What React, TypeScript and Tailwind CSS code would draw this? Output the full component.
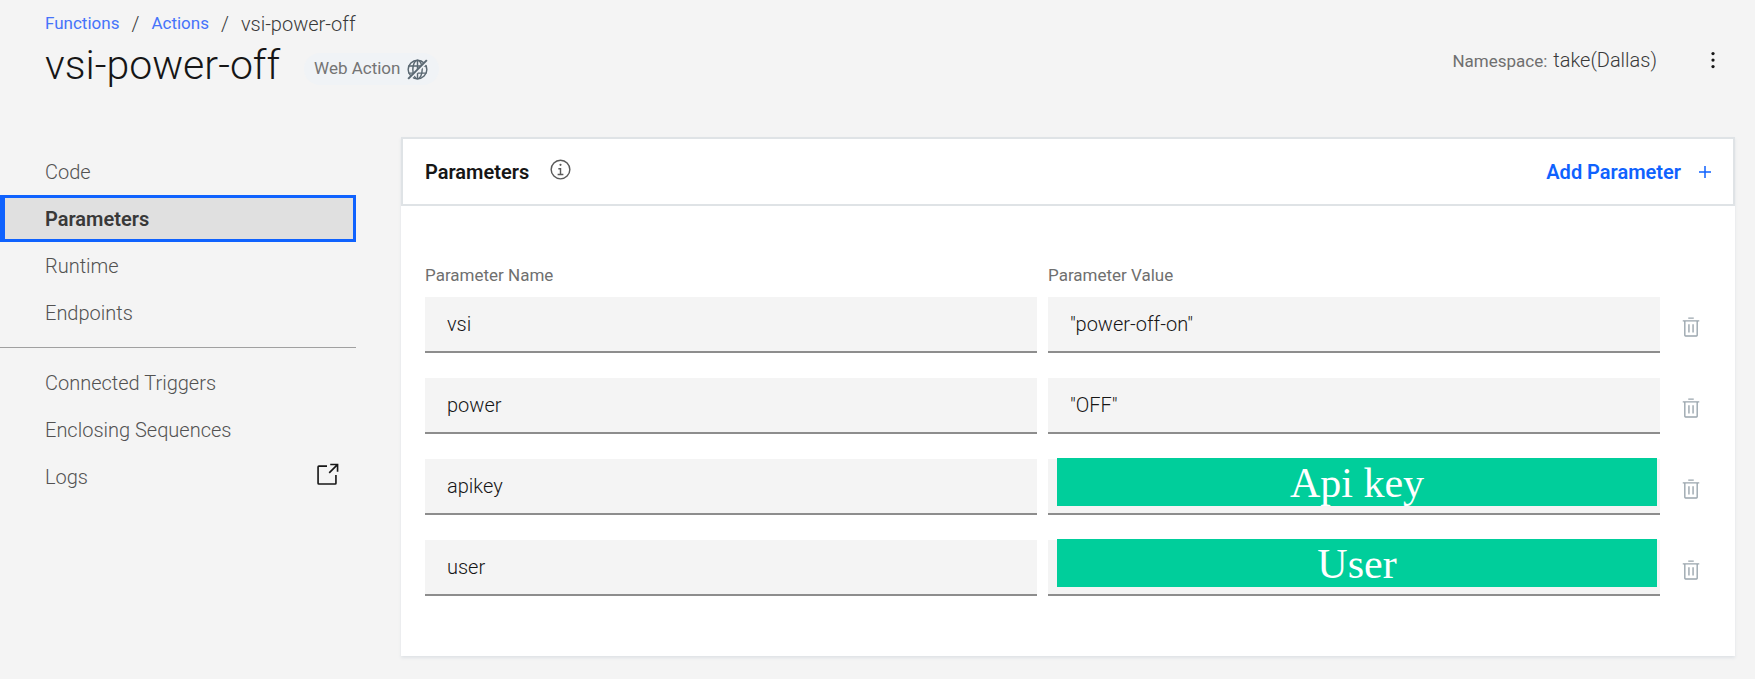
import type { ReactNode } from "react";

type Parameter = { id: string; name: string; value: string; mask?: string };

const parameters: Parameter[] = [
  { id: "vsi", name: "vsi", value: '"power-off-on"' },
  { id: "power", name: "power", value: '"OFF"' },
  { id: "apikey", name: "apikey", value: "", mask: "Api key" },
  { id: "user", name: "user", value: "", mask: "User" },
];

function Icon({ className, children }: { className: string; children: ReactNode }) {
  return (
    <svg viewBox="0 0 32 32" fill="currentColor" aria-hidden="true" className={className}>
      {children}
    </svg>
  );
}

function TrashIcon() {
  return (
    <Icon className="size-[22px]">
      <path d="M12 12h2v12h-2zM18 12h2v12h-2zM12 2h8v2h-8z" />
      <path d="M4 6v2h2v20a2 2 0 0 0 2 2h16a2 2 0 0 0 2-2V8h2V6zm4 22V8h16v20z" />
    </Icon>
  );
}

function LaunchIcon() {
  return (
    <Icon className="mb-1 size-[26px] text-[#161616]">
      <path d="M26 28H6a2 2 0 0 1-2-2V6a2 2 0 0 1 2-2h10v2H6v20h20V16h2v10a2 2 0 0 1-2 2z" />
      <path d="M20 2v2h6.586L18 12.586 19.414 14 28 5.414V12h2V2z" />
    </Icon>
  );
}

function InfoIcon() {
  return (
    <Icon className="size-[23px]">
      <path d="M17 22v-8h-4v2h2v6h-3v2h8v-2z" />
      <circle cx="16" cy="9.5" r="1.5" />
      <path d="M16 2a14 14 0 1 0 14 14A14 14 0 0 0 16 2zm0 26a12 12 0 1 1 12-12 12 12 0 0 1-12 12z" />
    </Icon>
  );
}

function GlobeOffIcon() {
  return (
    <svg viewBox="0 0 32 32" fill="none" stroke="currentColor" strokeWidth="2" aria-hidden="true" className="size-[23px] text-[#5a6872]">
      <circle cx="16" cy="16" r="13" />
      <ellipse cx="16" cy="16" rx="6.5" ry="13" />
      <path d="M3.5 11h25M3.5 21h25M16 3v26" />
      <path d="M4 30 30 4" stroke="#f0f3f6" strokeWidth="4" />
      <path d="M3 29 29 3" strokeWidth="2.8" />
    </svg>
  );
}

function NavLink({ label, active, icon }: { label: string; active?: boolean; icon?: ReactNode }) {
  return (
    <li>
      <a
        href="#"
        aria-current={active ? "page" : undefined}
        className={
          active
            ? "flex h-[47px] items-center border-3 border-l-5 border-[#0f62fe] bg-[#e0e0e0] pl-10 font-semibold text-[#393939]"
            : "flex h-[47px] items-center justify-between pr-4 pl-[45px]"
        }
      >
        {label}
        {icon}
      </a>
    </li>
  );
}

const fieldClass =
  "block h-14 w-full min-w-0 border-b-2 border-[#8d8d8d] bg-[#f4f4f4] px-[22px] text-[20px] font-light text-[#161616] outline-none";

export default function App() {
  return (
    <div className="min-h-screen bg-[#f4f4f4] pr-5 pb-5 font-['Roboto',sans-serif] text-[20px] font-light text-[#525252]">
      <header className="flex items-start justify-between pt-3 pl-[45px]">
        <div>
          <nav aria-label="Breadcrumb" className="flex h-6 items-center gap-3 text-[#393939]">
            <a href="#" className="text-[17px] font-normal text-[#4673fa]">Functions</a>
            <span>/</span>
            <a href="#" className="text-[17px] font-normal text-[#4673fa]">Actions</a>
            <span>/</span>
            <span>vsi-power-off</span>
          </nav>
          <div className="flex h-[58px] items-center gap-6">
            <h1 className="text-[41px] leading-[56px] text-[#161616]">vsi-power-off</h1>
            <span className="mt-2 flex h-8 items-center gap-1.5 rounded-full bg-[#f0f3f6] px-2.5 text-[17px] font-normal text-[#747474]">
              Web Action
              <GlobeOffIcon />
            </span>
          </div>
        </div>
        <div className="flex h-24 items-center gap-[43px] pr-[9px]">
          <p className="flex items-baseline gap-1.5 text-[#393939]">
            <span className="text-[17px] font-normal text-[#6f6f6f]">Namespace:</span>
            take(Dallas)
          </p>
          <button type="button" aria-label="More actions" className="text-[#161616]">
            <Icon className="size-[26px]">
              <circle cx="16" cy="8" r="2" />
              <circle cx="16" cy="16" r="2" />
              <circle cx="16" cy="24" r="2" />
            </Icon>
          </button>
        </div>
      </header>

      <div className="flex items-start gap-[45px] pt-[29px]">
        <nav aria-label="Action" className="w-[356px] shrink-0 pt-[11px]">
          <ul>
            <NavLink label="Code" />
            <NavLink label="Parameters" active />
            <NavLink label="Runtime" />
            <NavLink label="Endpoints" />
          </ul>
          <hr className="my-[11px] border-[#a0a0a0]" />
          <ul>
            <NavLink label="Connected Triggers" />
            <NavLink label="Enclosing Sequences" />
            <NavLink label="Logs" icon={<LaunchIcon />} />
          </ul>
        </nav>

        <main className="min-w-0 flex-1 bg-white shadow-[0_2px_3px_#dfe3e6]">
          <div className="flex h-[69px] items-center justify-between border-2 border-[#dfe3e6] pr-4 pl-[22px]">
            <div className="flex items-center gap-5">
              <h2 className="font-semibold text-[#161616]">Parameters</h2>
              <button type="button" aria-label="About parameters" className="pb-1 text-[#5a5a5a]">
                <InfoIcon />
              </button>
            </div>
            <button type="button" className="flex items-center gap-3 font-semibold text-[#0f62fe]">
              Add Parameter
              <Icon className="size-6">
                <path d="M17 15V8h-2v7H8v2h7v7h2v-7h7v-2z" />
              </Icon>
            </button>
          </div>

          <form className="grid grid-cols-[minmax(0,1fr)_minmax(0,1fr)_40px] items-center gap-x-[11px] gap-y-[25px] pt-[57px] pr-[24px] pb-[60px] pl-6">
            <label htmlFor="name-vsi" className="-mb-[15px] text-[17px] leading-6 font-normal text-[#6f6f6f]">
              Parameter Name
            </label>
            <label htmlFor="value-vsi" className="-mb-[15px] text-[17px] leading-6 font-normal text-[#6f6f6f]">
              Parameter Value
            </label>
            <span />
            {parameters.map((p) => (
              <div key={p.id} className="contents">
                <input id={`name-${p.id}`} aria-label={p.id === "vsi" ? undefined : "Parameter Name"} defaultValue={p.name} className={fieldClass} />
                <div className="relative">
                  <input id={`value-${p.id}`} aria-label={p.id === "vsi" ? undefined : "Parameter Value"} defaultValue={p.value} className={fieldClass} />
                  {p.mask && (
                    <div className="absolute inset-x-0 -top-px mr-[3px] ml-[9px] flex h-12 items-center justify-center bg-[#00ce9b] pt-0.5 font-['Liberation_Serif',serif] text-[42px] leading-11 font-normal text-white">
                      {p.mask}
                    </div>
                  )}
                </div>
                <button type="button" aria-label={`Delete ${p.name}`} className="flex justify-end pt-1 pr-[9px] text-[#9aa5ad]">
                  <TrashIcon />
                </button>
              </div>
            ))}
          </form>
        </main>
      </div>
    </div>
  );
}
